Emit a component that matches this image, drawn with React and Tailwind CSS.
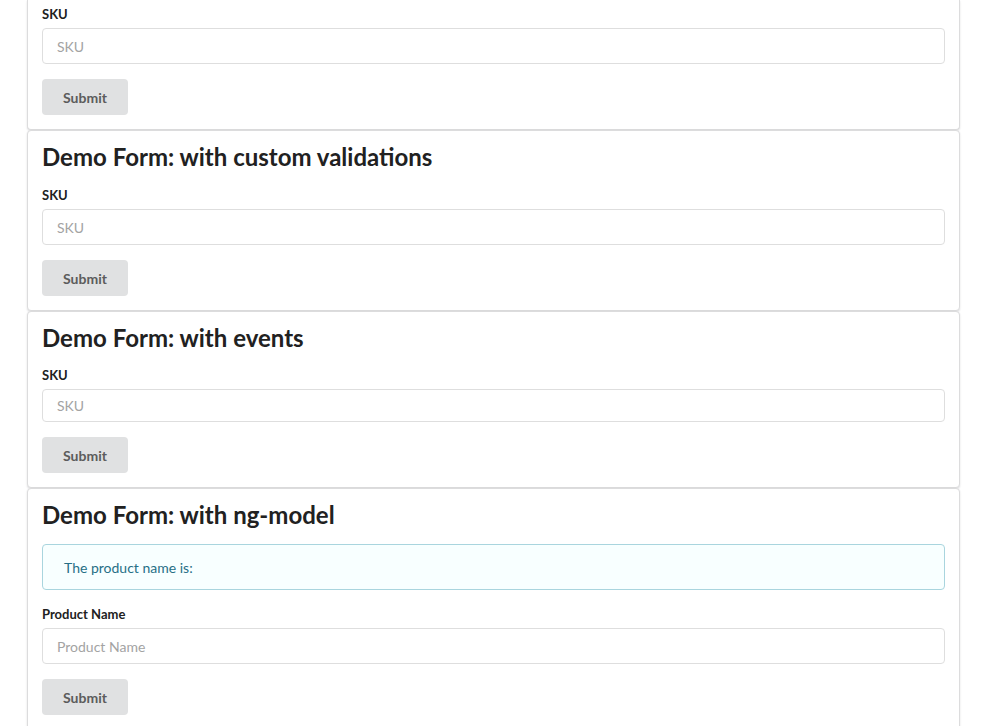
const font = { fontFamily: "Lato, 'Open Sans', sans-serif" };

const Segment = ({ className = "", children }) => (
    <div
        className={
            "bg-white border border-[#dcdcdd] rounded-[4px] shadow-[0_1px_2px_0_rgba(34,36,38,0.15)] px-[14px] pb-[14px] " +
            className
        }
    >
        {children}
    </div>
);

const Heading = ({ children, className = "" }) => (
    <h2 className={"-mt-[4px] text-[24px] leading-[31px] font-bold text-[#212121] " + className}>
        {children}
    </h2>
);

const Field = ({ label, placeholder, inputClass = "h-[36px]" }) => (
    <div className="flex flex-col">
        <label className="text-[13px] leading-[15px] font-bold text-[#212121] mb-[6px]">
            {label}
        </label>
        <input
            className={
                "w-full border border-[#dedede] rounded-[4px] px-[14px] text-[14px] text-[#212121] placeholder:text-[#a3a3a3] outline-none " +
                inputClass
            }
            placeholder={placeholder}
        />
    </div>
);

const SubmitButton = () => (
    <button className="w-[86px] h-[36px] bg-[#e0e1e2] rounded-[4px] text-[14px] font-bold text-[#5c5c5c]">
        Submit
    </button>
);

export default function App() {
    return (
        <div className="min-h-screen bg-white" style={font}>
            <div className="ml-[27px] w-[933px] flex flex-col">
                <Segment className="border-t-0 rounded-t-none pt-[7px]">
                    <Field label="SKU" placeholder="SKU" />
                    <div className="mt-[15px]">
                        <SubmitButton />
                    </div>
                </Segment>

                <Segment className="pt-[14px]">
                    <Heading className="mb-[16px]">Demo Form: with custom validations</Heading>
                    <Field label="SKU" placeholder="SKU" />
                    <div className="mt-[15px]">
                        <SubmitButton />
                    </div>
                </Segment>

                <Segment className="pt-[14px]">
                    <Heading className="mb-[15px]">Demo Form: with events</Heading>
                    <Field label="SKU" placeholder="SKU" inputClass="h-[33px]" />
                    <div className="mt-[15px]">
                        <SubmitButton />
                    </div>
                </Segment>

                <Segment className="pt-[14px] pb-[12px]">
                    <Heading className="mb-[14px]">Demo Form: with ng-model</Heading>
                    <div className="h-[46px] flex items-center bg-[#f8ffff] border border-[#a9d5de] rounded-[4px] px-[21px] text-[14px] text-[#276f86]">
                        The product name is:
                    </div>
                    <div className="mt-[17px]">
                        <Field label="Product Name" placeholder="Product Name" />
                    </div>
                    <div className="mt-[15px]">
                        <SubmitButton />
                    </div>
                </Segment>
            </div>
        </div>
    );
}
